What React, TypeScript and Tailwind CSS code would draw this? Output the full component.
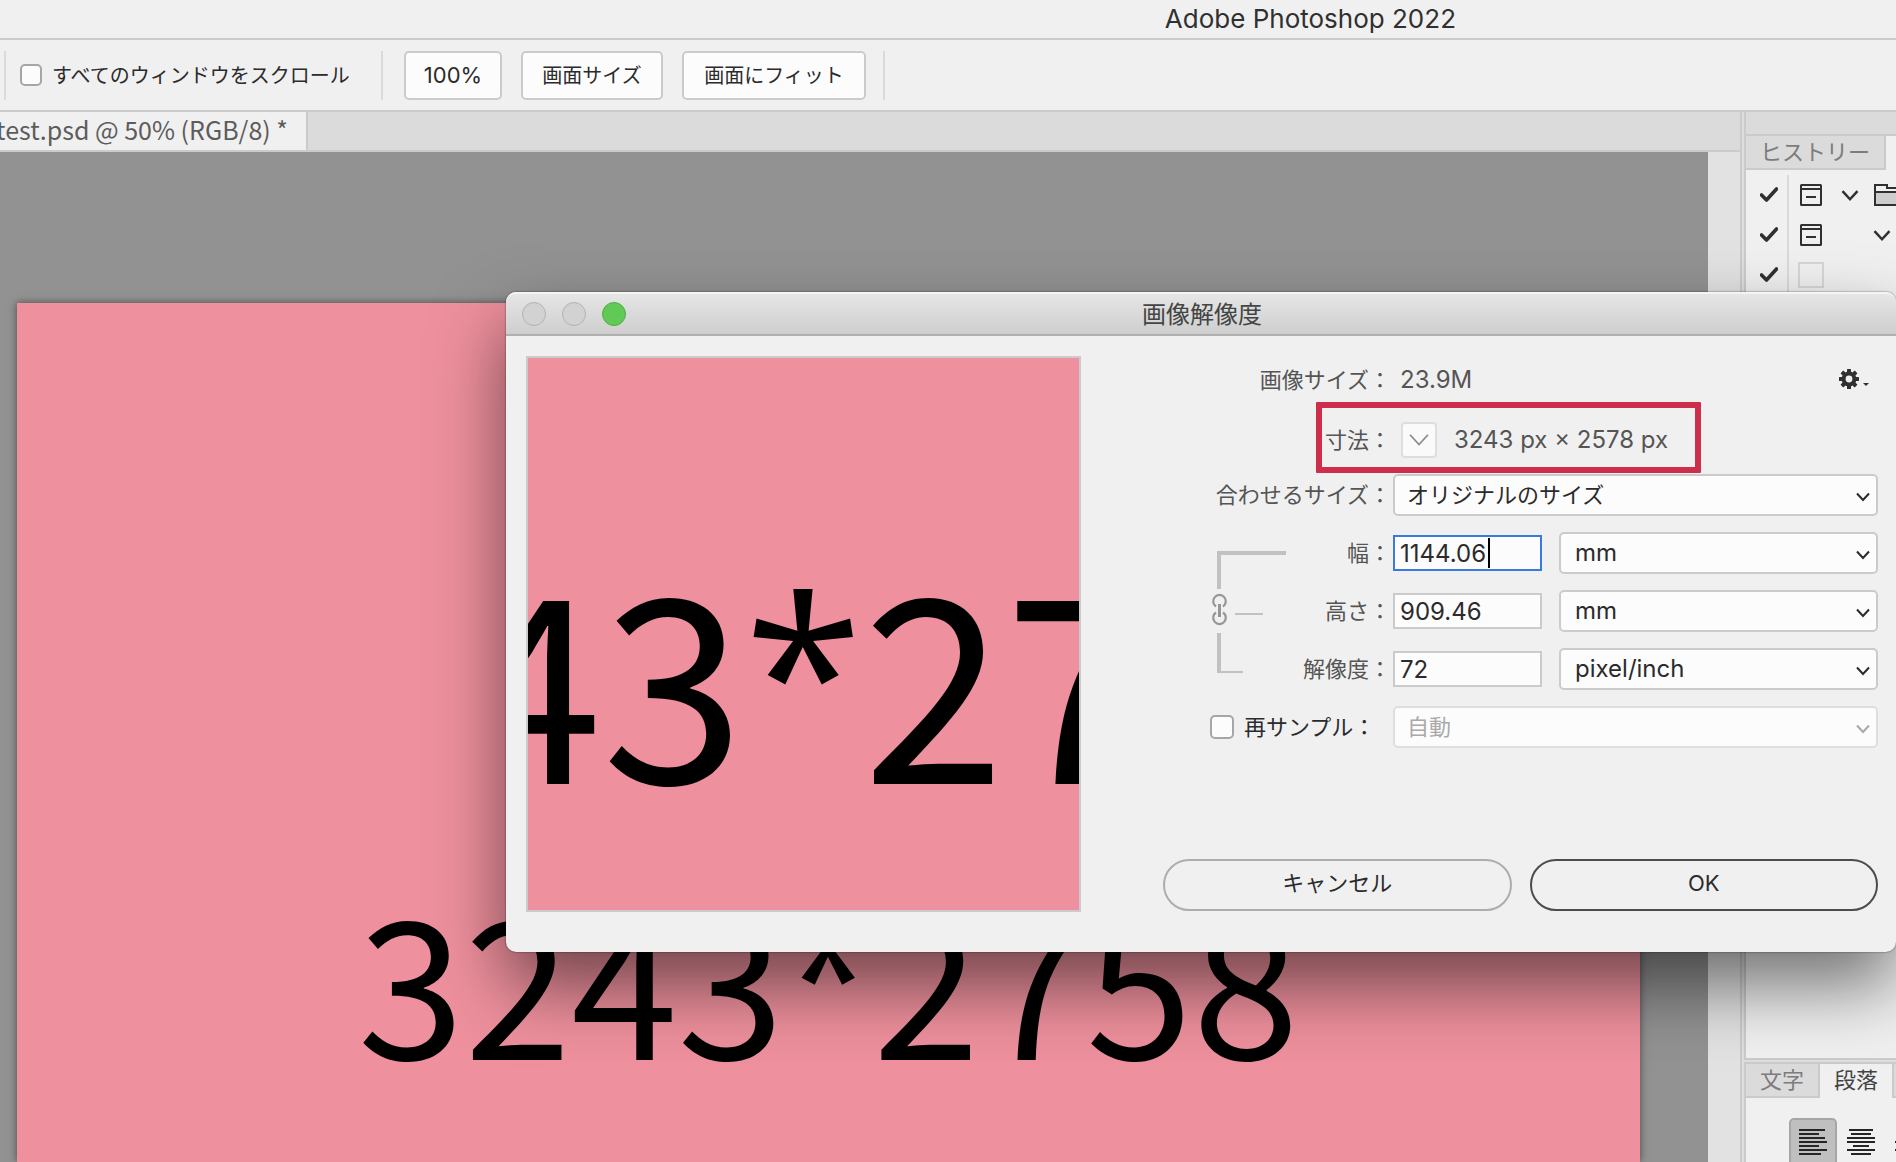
import React from "react";

const jp = "font-['Noto_Sans_CJK_JP',sans-serif]";
const ui = "font-['Inter','Noto_Sans_CJK_JP',sans-serif]";

function Chevron({ className }: { className: string }) {
  return (
    <svg viewBox="0 0 16 12" className={className} fill="none" stroke="currentColor" strokeWidth="2" aria-hidden="true">
      <path d="M2 2.5 8 9l6-6.5" />
    </svg>
  );
}

function SelectBox({ id, label, options, disabled = false, cjk = false }: { id: string; label?: string; options: string[]; disabled?: boolean; cjk?: boolean }) {
  return (
    <div className={`relative h-[42px] min-w-0 flex-1 ${disabled ? "text-[#a9a9a9]" : "text-[#2b2b2b]"}`}>
      <select
        id={id}
        aria-label={label}
        disabled={disabled}
        className={`h-full w-full appearance-none rounded-[5px] border-2 bg-[#fcfcfc] pr-10 opacity-100 ${cjk ? "pl-3 text-[22px]" : "pl-[14px] text-[24px]"} ${disabled ? "border-[#dedede]" : "border-[#cbcbcb]"}`}
      >
        {options.map((o) => (
          <option key={o}>{o}</option>
        ))}
      </select>
      <Chevron className="pointer-events-none absolute top-[17px] right-[7px] h-3 w-4" />
    </div>
  );
}

function Controls({ children }: { children: React.ReactNode }) {
  return <div className="flex w-[485px] shrink-0 items-center">{children}</div>;
}

function NumberRow({ id, label, value, unit, options, active = false }: { id: string; label: string; value: string; unit: string; options: string[]; active?: boolean }) {
  return (
    <div className="flex h-[58px] items-center justify-end gap-[2px]">
      <label htmlFor={id} className="text-[22px] text-[#555555]">{label}</label>
      <Controls>
        <div className="relative mr-[17px] h-[36px] w-[149px]">
          <input
            id={id}
            type="text"
            defaultValue={value}
            className={`h-full w-full border-2 bg-[#fcfcfc] pl-[5px] text-[24px] text-[#2b2b2b] outline-none ${active ? "border-[#3a7ae0]" : "border-[#cbcbcb]"}`}
          />
          {active && <span className="absolute top-[3px] left-[95px] h-[30px] w-[2px] bg-black" />}
        </div>
        <SelectBox id={`${id}-unit`} label={unit} options={options} />
      </Controls>
    </div>
  );
}

function ConstrainBracket() {
  return (
    <svg viewBox="0 0 80 174" className="ml-[46px] h-[174px] w-[80px] shrink-0" fill="none" aria-hidden="true">
      <path d="M77 29H10v36" stroke="#c1c1c1" strokeWidth="4" />
      <path d="M10 109v40" stroke="#c1c1c1" strokeWidth="4" />
      <path d="M10 148h24" stroke="#c1c1c1" strokeWidth="2" />
      <path d="M26 90h28" stroke="#c1c1c1" strokeWidth="2" />
      <g stroke="#969696" strokeWidth="2.2">
        <path d="M7 82.500a6.300 6.300 0 1 1 7 0M7 88.500a6.300 6.300 0 1 0 7 0" />
        <path d="M10.500 80v13" strokeWidth="3" />
      </g>
    </svg>
  );
}

function Gear() {
  return (
    <svg viewBox="0 0 32 22" className="h-[22px] w-8" aria-hidden="true">
      <g transform="translate(10 10)" fill="#303030">
        {[0, 45, 90, 135].map((a) => (
          <rect key={a} x="-2" y="-10" width="4" height="20" rx="0.500" transform={`rotate(${a})`} />
        ))}
        <circle r="7.400" />
        <circle r="3.400" fill="#f0f0f0" />
      </g>
      <path d="M24 14h6l-3 3z" fill="#303030" />
    </svg>
  );
}

function Caption() {
  return (
    <>
      3243<span className="align-[0.15em] font-['Open_Sans',sans-serif] text-[0.84em] leading-[0]">*</span>2758
    </>
  );
}

function ImageSizeDialog() {
  return (
    <div
      role="dialog"
      aria-labelledby="dialog-title"
      className={`absolute top-[292px] right-0 left-[506px] rounded-[10px] bg-[#f0f0f0] shadow-[0_0_2px_rgba(0,0,0,0.6),0_34px_70px_rgba(0,0,0,0.52)] ${ui}`}
    >
      <div className="flex h-[44px] items-center rounded-t-[10px] border-t-2 border-b-2 border-t-[#f4f4f4] border-b-[#b0b0b0] bg-linear-to-b from-[#e6e6e6] to-[#cecece] pl-4">
        <div className="flex w-[120px] gap-4">
          <button aria-label="閉じる" className="size-6 rounded-full border border-[#b3b3b3] bg-[#d2d2d2]" />
          <button aria-label="しまう" className="size-6 rounded-full border border-[#b3b3b3] bg-[#d2d2d2]" />
          <button aria-label="拡大" className="size-6 rounded-full border border-[#4fae43] bg-[#61c955]" />
        </div>
        <h1 id="dialog-title" className="flex-1 pt-[2px] pr-[134px] text-center text-[24px] text-[#444444]">画像解像度</h1>
      </div>
      <div className="flex pr-[18px] pb-10 pl-5">
        <div className={`mt-5 flex h-[556px] w-[555px] shrink-0 justify-center overflow-hidden border-2 border-[#cbcbcb] bg-[#ee909d] ${jp}`}>
          <p className="mt-[187px] h-[256px] shrink-0 text-[256px] leading-[256px] whitespace-nowrap text-black"><Caption /></p>
        </div>
        <form className="flex flex-1 flex-col pt-[10px] pl-[82px]" onSubmit={(e) => e.preventDefault()}>
          <div className="flex h-[68px] items-center justify-end gap-[2px] text-[22px] text-[#555555]">
            <span>画像サイズ：</span>
            <Controls>
              <span className="flex-1 pl-[7px] text-[24px]">23.9M</span>
              <button type="button" aria-label="設定" className="mr-[7px]"><Gear /></button>
            </Controls>
          </div>
          <div className="relative flex h-[52px] items-center justify-end gap-[2px] text-[22px] text-[#555555]">
            <span>寸法：</span>
            <Controls>
              <button type="button" aria-label="単位" className="ml-2 flex size-9 items-center justify-center rounded-[4px] border-2 border-[#dedede] bg-[#fafafa] text-[#8c8c8c]">
                <Chevron className="h-[18px] w-6 shrink-0 stroke-[1.2]" />
              </button>
              <span className="pl-[17px] text-[24px] whitespace-nowrap">3243 px × 2578 px</span>
            </Controls>
            <span className="pointer-events-none absolute top-[-12px] right-[177px] h-[71px] w-[385px] rounded-[1px] border-6 border-[#cd2e4b]" />
          </div>
          <div className="flex h-[58px] items-center justify-end gap-[2px]">
            <label htmlFor="fit" className="text-[22px] text-[#555555]">合わせるサイズ：</label>
            <Controls>
              <SelectBox id="fit" options={["オリジナルのサイズ"]} cjk />
            </Controls>
          </div>
          <div className="flex">
            <ConstrainBracket />
            <div className="flex-1">
              <NumberRow id="width" label="幅：" value="1144.06" unit="幅の単位" options={["mm", "pixel"]} active />
              <NumberRow id="height" label="高さ：" value="909.46" unit="高さの単位" options={["mm", "pixel"]} />
              <NumberRow id="resolution" label="解像度：" value="72" unit="解像度の単位" options={["pixel/inch", "pixel/cm"]} />
            </div>
          </div>
          <div className="flex h-[58px] items-center">
            <input id="resample" type="checkbox" className="ml-[47px] size-6 appearance-none rounded-[5px] border-2 border-[#a6a6a6] bg-[#fcfcfc]" />
            <label htmlFor="resample" className="flex-1 pl-[10px] text-[22px] whitespace-nowrap text-[#2b2b2b]">再サンプル：</label>
            <Controls>
              <SelectBox id="method" label="再サンプル方式" options={["自動"]} disabled cjk />
            </Controls>
          </div>
          <div className="mt-[103px] flex gap-[18px] text-[22px] text-[#2b2b2b]">
            <button type="button" className="h-[52px] flex-1 rounded-full border-2 border-[#adadad] pb-1">キャンセル</button>
            <button type="submit" className="h-[52px] flex-1 rounded-full border-2 border-[#4c4c4c] pb-1">OK</button>
          </div>
        </form>
      </div>
    </div>
  );
}

function Check() {
  return (
    <svg viewBox="0 0 18 16" className="h-4 w-[18px]" fill="none" stroke="#303030" strokeLinejoin="round" aria-hidden="true">
      <path d="m1.500 8 5 5L16.500 2" strokeLinecap="round" strokeWidth="3.600" />
    </svg>
  );
}

function DialogToggle() {
  return (
    <svg viewBox="0 0 22 22" className="size-[22px]" fill="none" stroke="#303030" strokeWidth="2" aria-hidden="true">
      <rect x="1" y="1" width="20" height="20" rx="0.500" />
      <path d="M1 5h20M6 13h10" />
    </svg>
  );
}

function Folder() {
  return (
    <svg viewBox="0 0 28 22" className="h-[22px] w-7 shrink-0" fill="none" stroke="#303030" strokeWidth="2" aria-hidden="true">
      <path d="M1 8h26v13H1z" fill="#cdcdcd" />
      <path d="M1 8V1h12v3h14v4" />
    </svg>
  );
}

function ActionRow({ toggle, children }: { toggle: boolean; children?: React.ReactNode }) {
  return (
    <li className="flex h-10 items-center">
      <span className="flex h-10 w-[43px] shrink-0 items-center border-r-2 border-[#dadada] pl-[14px]"><Check /></span>
      <span className="flex w-11 shrink-0 justify-center">
        {toggle ? <DialogToggle /> : <span className="size-[26px] border-2 border-[#d6d6d6]" />}
      </span>
      {children}
    </li>
  );
}

const lines: Record<string, [number, number][]> = {
  left: [[0, 26], [0, 20], [0, 26], [0, 28], [0, 20], [0, 28], [0, 22]],
  center: [[2, 24], [4, 20], [0, 28], [0, 28], [6, 16], [0, 28], [4, 20]],
  right: [[2, 26], [8, 20], [2, 26], [0, 28], [8, 20], [0, 28], [6, 22]],
};

function AlignIcon({ kind }: { kind: string }) {
  return (
    <svg viewBox="0 0 28 26" className="h-[26px] w-7 shrink-0" fill="#252525" aria-hidden="true">
      {lines[kind].map(([x, w], i) => (
        <rect key={i} x={x} y={i * 4} width={w} height="2" />
      ))}
    </svg>
  );
}

function SidePanels() {
  return (
    <aside className="flex w-[156px] shrink-0 flex-col overflow-hidden border-l-2 border-[#cbcbcb] bg-[#dedede] pl-[2px] text-[22px]">
      <section className="flex flex-1 flex-col border-b-2 border-l-2 border-[#cbcbcb] bg-[#f0f0f0]">
        <div className="h-6 border-b-2 border-[#cbcbcb] bg-[#dbdbdb]" />
        <div className="flex">
          <button className="h-[34px] w-[140px] border-r-2 border-b-2 border-[#cbcbcb] bg-[#dbdbdb] pb-1 leading-[28px] whitespace-nowrap text-[#7c7c7c]">ヒストリー</button>
        </div>
        <ul className="pt-[5px]">
          <ActionRow toggle>
            <Chevron className="mr-[14px] ml-[7px] h-[15px] w-5 shrink-0 text-[#303030]" />
            <Folder />
          </ActionRow>
          <ActionRow toggle>
            <Chevron className="ml-[39px] h-[15px] w-5 shrink-0 text-[#303030]" />
          </ActionRow>
          <ActionRow toggle={false} />
        </ul>
      </section>
      <section className="mt-[2px] h-[100px] border-t-2 border-l-2 border-[#cbcbcb] bg-[#f0f0f0]">
        <div className="flex h-[34px]">
          <button className="w-[74px] shrink-0 border-r-2 border-b-2 border-[#cbcbcb] bg-[#dbdbdb] pb-1 leading-[28px] text-[#7c7c7c]">文字</button>
          <button className="w-[72px] shrink-0 pb-[6px] leading-[28px] text-[#444444]">段落</button>
          <span className="w-4 shrink-0 border-b-2 border-l-2 border-[#cbcbcb] bg-[#dbdbdb]" />
        </div>
        <div className="mt-5 flex pl-[43px]">
          <button aria-label="左揃え" className="flex h-[50px] w-12 shrink-0 justify-center rounded-[5px] border-2 border-[#a6a6a6] bg-[#bfbfbf] pt-[9px]"><AlignIcon kind="left" /></button>
          <button aria-label="中央揃え" className="flex h-[50px] w-12 shrink-0 justify-center pt-[11px]"><AlignIcon kind="center" /></button>
          <button aria-label="右揃え" className="flex h-[50px] w-12 shrink-0 justify-center pt-[11px]"><AlignIcon kind="right" /></button>
        </div>
      </section>
    </aside>
  );
}

const toolButton = "h-[49px] shrink-0 rounded-[5px] border-2 border-[#cbcbcb] bg-[#fcfcfc]";

export default function App() {
  return (
    <div className={`relative flex h-screen flex-col overflow-hidden bg-[#f0f0f0] ${jp}`}>
      <header className={`flex h-10 shrink-0 items-center justify-end border-b-2 border-[#cbcbcb] pr-[440px] pb-[2px] text-[26px] text-[#303030] ${ui}`}>
        Adobe Photoshop 2022
      </header>
      <div className="flex h-[72px] shrink-0 items-center border-b-2 border-[#cbcbcb] text-[20px] text-[#2b2b2b]">
        <span className="ml-1 h-[49px] w-[2px] bg-[#dadada]" />
        <input id="scroll-all" type="checkbox" className="ml-[14px] size-[22px] appearance-none rounded-[5px] border-2 border-[#a6a6a6] bg-[#fcfcfc]" />
        <label htmlFor="scroll-all" className="w-[329px] pl-[10px] whitespace-nowrap">すべてのウィンドウをスクロール</label>
        <span className="mr-[21px] ml-[10px] h-[49px] w-[2px] shrink-0 bg-[#dadada]" />
        <button className={`${toolButton} mr-[19px] w-[98px] text-[22px] ${ui}`}>100%</button>
        <button className={`${toolButton} mr-[19px] w-[142px]`}>画面サイズ</button>
        <button className={`${toolButton} mr-[17px] w-[184px]`}>画面にフィット</button>
        <span className="h-[49px] w-[2px] bg-[#dadada]" />
      </div>
      <div className="flex min-h-0 flex-1">
        <main className="flex min-w-0 flex-1 flex-col">
          <div className="flex h-10 shrink-0 border-b-2 border-[#cbcbcb] bg-[#dbdbdb]">
            <button className="flex w-[308px] items-center justify-end border-r-2 border-[#cbcbcb] bg-[#f0f0f0] pr-[18px] pb-1 text-[25px] leading-[34px] whitespace-nowrap text-[#5c5c5c]">
              test.psd @ 50% (RGB/8) *
            </button>
          </div>
          <div className="flex min-h-0 flex-1">
            <div className="flex flex-1 overflow-hidden bg-[#929292] pt-[151px] pr-[68px] pl-[17px]">
              <div className="flex-1 bg-[#ee909d] text-center shadow-[0_0_8px_rgba(0,0,0,0.5)]">
                <p className="mt-[573px] text-[192px] leading-[200px] whitespace-nowrap text-black"><Caption /></p>
              </div>
            </div>
            <div className="w-8 shrink-0 bg-[#e2e2e2]" />
          </div>
        </main>
        <SidePanels />
      </div>
      <ImageSizeDialog />
    </div>
  );
}
